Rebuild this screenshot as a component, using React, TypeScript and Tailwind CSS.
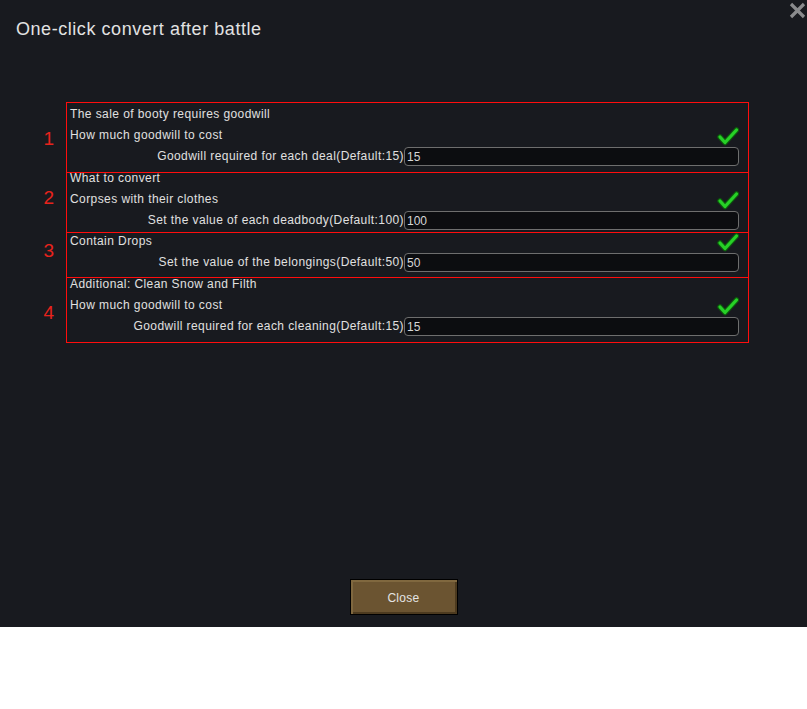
import React from "react";

const font = { fontFamily: '"Liberation Sans", Arial, sans-serif' };

type Row =
  | { kind: "text"; text: string; check?: boolean }
  | { kind: "input"; label: string; value: string };

type Section = {
  num: string;
  numPad: string;
  boxH: string;
  shift: string;
  rows: Row[];
};

const sections: Section[] = [
  {
    num: "1",
    numPad: "pt-[27px]",
    boxH: "h-[71px]",
    shift: "mt-px",
    rows: [
      { kind: "text", text: "The sale of booty requires goodwill" },
      { kind: "text", text: "How much goodwill to cost", check: true },
      { kind: "input", label: "Goodwill required for each deal(Default:15)", value: "15" },
    ],
  },
  {
    num: "2",
    numPad: "pt-[16px]",
    boxH: "h-[61px]",
    shift: "-mt-[5px]",
    rows: [
      { kind: "text", text: "What to convert" },
      { kind: "text", text: "Corpses with their clothes", check: true },
      { kind: "input", label: "Set the value of each deadbody(Default:100)", value: "100" },
    ],
  },
  {
    num: "3",
    numPad: "pt-[9px]",
    boxH: "h-[46px]",
    shift: "-mt-[2px]",
    rows: [
      { kind: "text", text: "Contain Drops", check: true },
      { kind: "input", label: "Set the value of the belongings(Default:50)", value: "50" },
    ],
  },
  {
    num: "4",
    numPad: "pt-[26px]",
    boxH: "h-[66px]",
    shift: "-mt-[4px]",
    rows: [
      { kind: "text", text: "Additional: Clean Snow and Filth" },
      { kind: "text", text: "How much goodwill to cost", check: true },
      { kind: "input", label: "Goodwill required for each cleaning(Default:15)", value: "15" },
    ],
  },
];

const Check = () => (
  <svg width="22" height="19" viewBox="0 0 22 19" className="shrink-0">
    <polyline
      points="3,10 8,15.5 19.5,3"
      fill="none"
      stroke="#0d5a0d"
      strokeWidth="5.5"
      strokeLinecap="round"
      strokeLinejoin="round"
    />
    <polyline
      points="3,10 8,15.5 19.5,3"
      fill="none"
      stroke="#27d027"
      strokeWidth="3.2"
      strokeLinecap="round"
      strokeLinejoin="round"
    />
  </svg>
);

const SectionRow = ({ s, first }: { s: Section; first: boolean }) => (
  <div className={`flex ${first ? "" : "-mt-px"}`}>
    <div className={`w-[66px] shrink-0 pl-[40px] ${s.numPad}`}>
      <span className="block w-[18px] text-center text-[19px] leading-[19px] text-[#e8231c]">
        {s.num}
      </span>
    </div>
    <div className={`w-[683px] ${s.boxH} border border-[#ff0d0d] pl-[3px] pr-[9px]`}>
      <div className={s.shift}>
        {s.rows.map((r, i) =>
          r.kind === "text" ? (
            <div key={i} className="flex h-[21px] items-end justify-between">
              <span className="self-center leading-[21px]">{r.text}</span>
              {r.check && <Check />}
            </div>
          ) : (
            <div key={i} className="flex h-[21px] items-center justify-end">
              <span className="leading-[21px]">{r.label}</span>
              <div className="flex h-[19px] w-[335px] items-center rounded-[4px] border border-[#6e6e6e] bg-[#0c0d10] pl-[2px] tracking-normal text-[#d6d6d6]">
                {r.value}
              </div>
            </div>
          )
        )}
      </div>
    </div>
  </div>
);

export default function App() {
  return (
    <div className="h-[709px] w-full bg-white" style={font}>
      <div className="flex h-[627px] flex-col bg-[#181a1f] text-[12px] tracking-[0.42px] text-[#e0e0e0]">
        <div className="flex justify-between">
          <h1 className="pl-[16px] pt-[18px] text-[18px] leading-[22px] tracking-[0.55px] text-[#e2e2e2]">
            One-click convert after battle
          </h1>
          <svg width="17" height="17" viewBox="0 0 17 17" className="mr-[1px] mt-[2px]">
            <path d="M2 2 L15 15 M15 2 L2 15" stroke="#8a8b8d" strokeWidth="3.2" />
          </svg>
        </div>
        <div className="mt-[62px] flex flex-col">
          {sections.map((s, i) => (
            <SectionRow key={s.num} s={s} first={i === 0} />
          ))}
        </div>
        <div className="flex-1" />
        <button className="mx-auto mb-[12px] flex h-[36px] w-[108px] items-center justify-center border border-black bg-[#6b5431] pt-px text-[12px] tracking-[0.3px] text-[#e4e4e4] shadow-[inset_2px_2px_0_#80683f,inset_-2px_-2px_0_#4c3a1f]">
          Close
        </button>
      </div>
    </div>
  );
}
